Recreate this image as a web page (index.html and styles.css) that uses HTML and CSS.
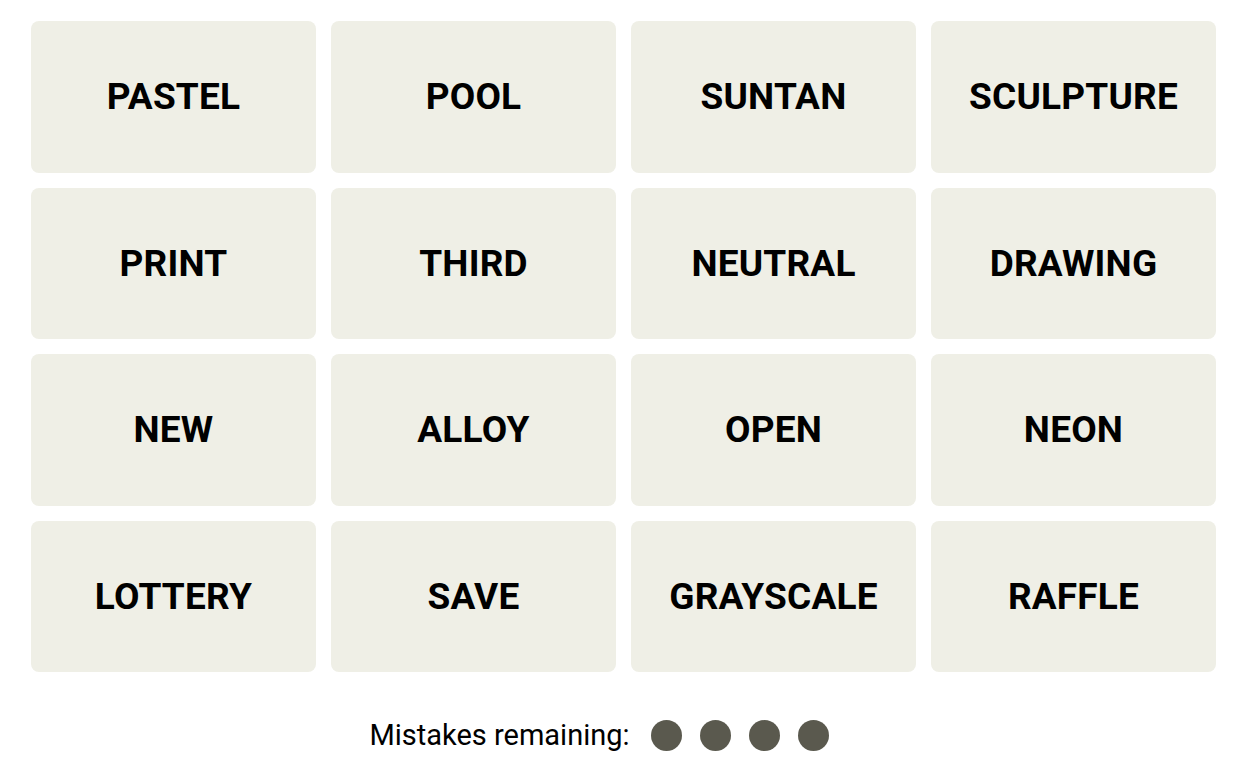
FILE: index.html
```html
<!DOCTYPE html>
<html lang="en">
<head>
    <meta charset="UTF-8">
    <meta name="viewport" content="width=device-width, initial-scale=1.0">
    <title>Connections</title>
    <link rel="stylesheet" href="styles.css">
</head>
<body>
    <div class="game">
        <div class="board">
            <div class="tile">PASTEL</div>
            <div class="tile">POOL</div>
            <div class="tile">SUNTAN</div>
            <div class="tile">SCULPTURE</div>
            <div class="tile">PRINT</div>
            <div class="tile">THIRD</div>
            <div class="tile">NEUTRAL</div>
            <div class="tile">DRAWING</div>
            <div class="tile">NEW</div>
            <div class="tile">ALLOY</div>
            <div class="tile">OPEN</div>
            <div class="tile">NEON</div>
            <div class="tile">LOTTERY</div>
            <div class="tile">SAVE</div>
            <div class="tile">GRAYSCALE</div>
            <div class="tile">RAFFLE</div>
        </div>

        <div class="mistakes">
            <span class="mistakes-label">Mistakes remaining:</span>
            <span class="dots">
                <span class="dot"></span>
                <span class="dot"></span>
                <span class="dot"></span>
                <span class="dot"></span>
            </span>
        </div>
    </div>
</body>
</html>
```

FILE: styles.css
```css
body {
    margin: 0;
    background-color: #fff;
    font-family: Roboto, "Liberation Sans", sans-serif;
    color: #000;
}

.game {
    padding: 21px 0 0 31px;
    width: 1185px;
}

.board {
    display: grid;
    grid-template-columns: repeat(4, 285px);
    grid-auto-rows: 151.5px;
    column-gap: 15px;
    row-gap: 15px;
}

.tile {
    background-color: #efefe6;
    border-radius: 8px;
    display: flex;
    align-items: center;
    justify-content: center;
    font-size: 37px;
    font-weight: 700;
    letter-spacing: 0.2px;
}

.mistakes {
    display: flex;
    align-items: center;
    justify-content: center;
    gap: 21px;
    margin-top: 46px;
    margin-right: 49px;
}

.mistakes-label {
    font-size: 29px;
}

.dots {
    display: flex;
    gap: 18px;
}

.dot {
    width: 31px;
    height: 31px;
    border-radius: 50%;
    background-color: #5a594e;
}
```
